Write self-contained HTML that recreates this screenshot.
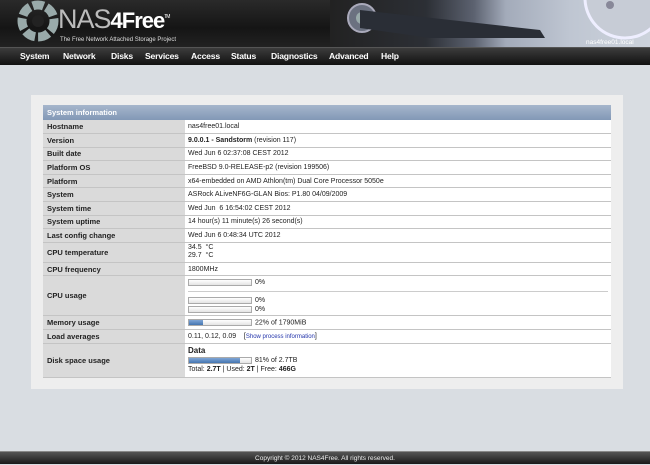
<!DOCTYPE html>
<html><head><meta charset="utf-8"><style>
*{margin:0;padding:0;box-sizing:border-box}
body{width:650px;height:464px;background:#d9dde2;font-family:"Liberation Sans",sans-serif;position:relative;overflow:hidden}
#hdr{position:absolute;left:0;top:0;width:650px;height:47px;background:linear-gradient(#2a2a2a,#151515 60%,#222);overflow:hidden}
#disk{position:absolute;left:330px;top:0;width:320px;height:47px;background:linear-gradient(90deg,#222 0%,#2c2f35 30%,#5c6270 45%,#a3abba 55%,#bfc6d2 75%,#cdd3dc 100%)}
#nav{position:absolute;left:0;top:47px;width:650px;height:18px;background:linear-gradient(#3c3c3c,#111);border-top:1px solid #555}
#nav span{position:absolute;top:3px;color:#fff;font-size:8.6px;font-weight:bold;letter-spacing:-0.2px}
#panel{position:absolute;left:31px;top:95px;width:592px;height:294px;background:#eeeeee}
table{position:absolute;left:43px;top:105px;width:568px;border-collapse:collapse;font-size:7px;color:#222}
th{background:linear-gradient(#a6b6cc,#8298b6);color:#fff;text-align:left;height:15px;padding-left:4px;font-size:7.5px}
td{border-bottom:1px solid #c4c4c4;padding-left:4px;height:13.6px}
td.l{background:#dadada;font-weight:bold;width:142px;font-size:7.5px}
td.v{background:#fff;padding-left:3px}
.bar{display:inline-block;width:64px;height:7px;border:1px solid #aaa;background:linear-gradient(#fff,#e4e4e4);vertical-align:middle;margin-right:3px;position:relative}
.bar i{position:absolute;left:0;top:0;bottom:0;background:linear-gradient(#7fa6d6,#4575b0)}
#ftr{position:absolute;left:0;top:451px;width:650px;height:13px;background:linear-gradient(#555,#1a1a1a);color:#eee;font-size:6.5px;text-align:center;line-height:13px;border-top:1px solid #888}
</style></head><body>
<div id="hdr">
<div id="disk"></div>
<svg style="position:absolute;left:0;top:0" width="650" height="47">
<circle cx="38" cy="21" r="16" fill="none" stroke="#9aa" stroke-width="9" stroke-dasharray="11 3"/>
<circle cx="38" cy="21" r="6" fill="#222"/>
<circle cx="362" cy="18" r="14" fill="#6b7180" stroke="#aab" stroke-width="2"/>
<circle cx="362" cy="18" r="6" fill="#9aa"/>
<path d="M360 10 L540 30 L545 38 L430 38 L360 28Z" fill="#2a2e36"/>
<circle cx="625" cy="-2" r="40" fill="#c7ccd6" stroke="#eef" stroke-width="3"/>
<circle cx="610" cy="5" r="4" fill="#889"/>
</svg>
<div style="position:absolute;left:58px;top:4px;color:#bbb;font-size:27px;letter-spacing:-1px;font-weight:normal">NAS<span style="color:#fff;font-weight:bold;font-size:22px">4Free</span><sup style="font-size:5px;color:#fff">TM</sup></div>
<div style="position:absolute;left:60px;top:37px;color:#ddd;font-size:6px">The Free Network Attached Storage Project</div>
<div style="position:absolute;left:586px;top:39px;color:#fff;font-size:6.5px">nas4free01.local</div>
</div>
<div id="nav">
<span style="left:20px">System</span><span style="left:63px">Network</span><span style="left:111px">Disks</span><span style="left:145px">Services</span><span style="left:191px">Access</span><span style="left:231px">Status</span><span style="left:271px">Diagnostics</span><span style="left:329px">Advanced</span><span style="left:381px">Help</span>
</div>
<div id="panel"></div>
<table>
<tr><th colspan="2">System information</th></tr>
<tr><td class="l">Hostname</td><td class="v">nas4free01.local</td></tr>
<tr><td class="l">Version</td><td class="v"><b>9.0.0.1 - Sandstorm</b> (revision 117)</td></tr>
<tr><td class="l">Built date</td><td class="v">Wed Jun 6 02:37:08 CEST 2012</td></tr>
<tr><td class="l">Platform OS</td><td class="v">FreeBSD 9.0-RELEASE-p2 (revision 199506)</td></tr>
<tr><td class="l">Platform</td><td class="v">x64-embedded on AMD Athlon(tm) Dual Core Processor 5050e</td></tr>
<tr><td class="l">System</td><td class="v">ASRock ALiveNF6G-GLAN Bios: P1.80 04/09/2009</td></tr>
<tr><td class="l">System time</td><td class="v">Wed Jun &nbsp;6 16:54:02 CEST 2012</td></tr>
<tr><td class="l">System uptime</td><td class="v">14 hour(s) 11 minute(s) 26 second(s)</td></tr>
<tr><td class="l">Last config change</td><td class="v">Wed Jun 6 0:48:34 UTC 2012</td></tr>
<tr><td class="l" style="height:20px">CPU temperature</td><td class="v" style="line-height:8px">34.5 &nbsp;°C<br>29.7 &nbsp;°C</td></tr>
<tr><td class="l">CPU frequency</td><td class="v">1800MHz</td></tr>
<tr><td class="l" style="height:40px">CPU usage</td><td class="v" style="line-height:9px"><span class="bar"></span>0%<br><span style="display:block;height:1px;background:#ccc;width:420px;margin:4px 0"></span><span class="bar"></span>0%<br><span class="bar"></span>0%</td></tr>
<tr><td class="l">Memory usage</td><td class="v"><span class="bar"><i style="width:14px"></i></span>22% of 1790MiB</td></tr>
<tr><td class="l">Load averages</td><td class="v">0.11, 0.12, 0.09 &nbsp;&nbsp;&nbsp;[<span style="color:#2233aa;font-size:6px">Show process information</span>]</td></tr>
<tr><td class="l" style="height:34px">Disk space usage</td><td class="v" style="line-height:9px"><b style="font-size:8px">Data</b><br><span class="bar"><i style="width:51px"></i></span>81% of 2.7TB<br>Total: <b>2.7T</b> | Used: <b>2T</b> | Free: <b>466G</b></td></tr>
</table>
<div id="ftr">Copyright © 2012 NAS4Free. All rights reserved.</div>
</body></html>
